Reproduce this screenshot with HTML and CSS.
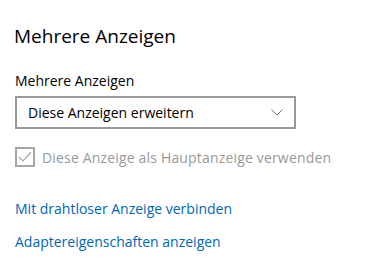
FILE: index.html
```html
<!DOCTYPE html>
<html lang="de">
<head>
<meta charset="utf-8">
<link rel="stylesheet" href="styles.css">
</head>
<body>
<main class="page">
  <h1 class="title">Mehrere Anzeigen</h1>
  <div class="field">
    <label class="label">Mehrere Anzeigen</label>
    <div class="select">
      <span class="select-text">Diese Anzeigen erweitern</span>
      <svg class="chev" width="12" height="7" viewBox="0 0 12 7"><path d="M0.5 0.5 L6 6 L11.5 0.5" fill="none" stroke="#777" stroke-width="1"/></svg>
    </div>
  </div>
  <div class="check">
    <span class="box"><svg width="20" height="20" viewBox="0 0 20 20"><rect x="1" y="1" width="18" height="18" fill="none" stroke="#a6a6a6" stroke-width="2"/><path d="M4 10 L8 14 L16 5" fill="none" stroke="#a6a6a6" stroke-width="1.2"/></svg></span>
    <span class="check-text">Diese Anzeige als Hauptanzeige verwenden</span>
  </div>
  <a class="link link-first" href="#">Mit drahtloser Anzeige verbinden</a>
  <a class="link" href="#">Adaptereigenschaften anzeigen</a>
</main>
</body>
</html>
```
FILE: styles.css
```css
html, body {
  margin: 0;
  background: #fff;
}
.page {
  display: flex;
  flex-direction: column;
  align-items: flex-start;
  padding: 22px 0 0 15px;
  font-family: "Open Sans", sans-serif;
  color: #000;
}
.title {
  margin: 0;
  font-weight: 400;
  font-size: 19px;
  line-height: 28px;
  margin-left: -1px;
}
.field {
  margin-top: 21px;
  display: flex;
  flex-direction: column;
}
.label {
  font-size: 14px;
  line-height: 20px;
}
.select {
  margin-top: 5px;
  box-sizing: border-box;
  width: 281px;
  height: 33px;
  border: 2px solid #999;
  display: flex;
  align-items: center;
  justify-content: space-between;
  padding: 0 11px 0 11px;
}
.select-text {
  font-size: 14px;
}
.chev {
  display: block;
}
.check {
  margin-top: 18px;
  display: flex;
  align-items: center;
  gap: 7px;
}
.box svg {
  display: block;
}
.check-text {
  font-size: 14px;
  color: #999;
  letter-spacing: 0.17px;
}
.link {
  font-size: 14px;
  color: #0067b8;
  text-decoration: none;
  margin-top: 32px;
  line-height: 20px;
}
.link + .link {
  margin-top: 13px;
}
```
